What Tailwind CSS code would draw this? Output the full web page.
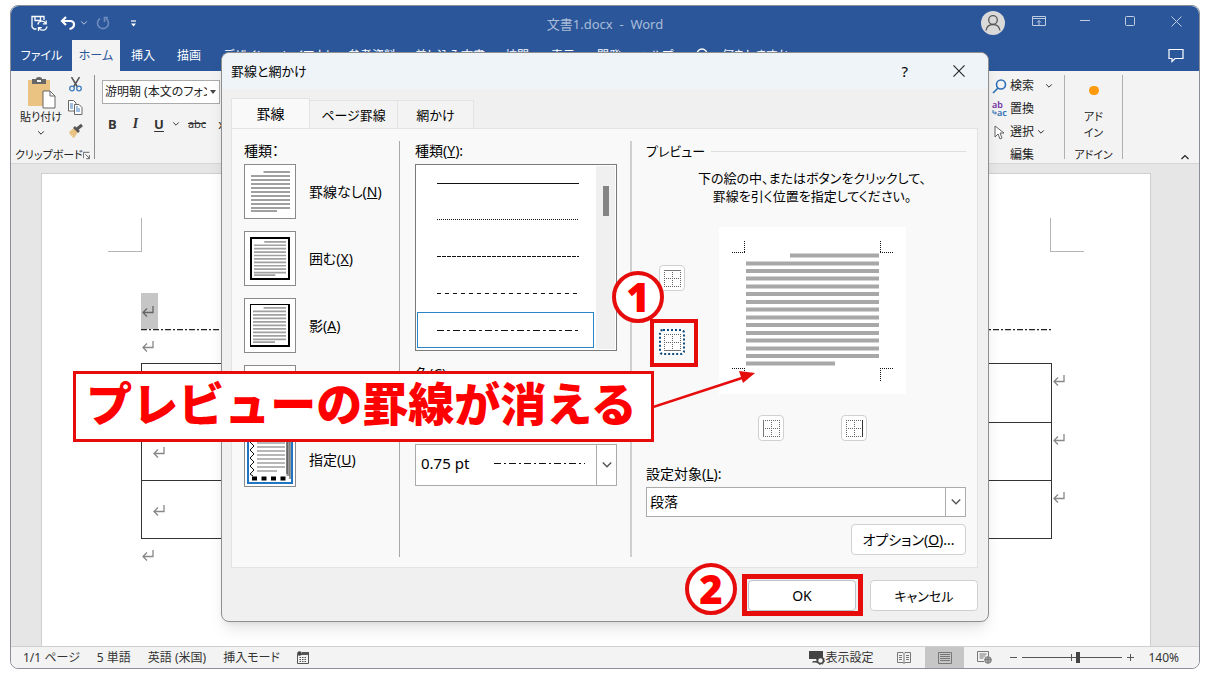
<!DOCTYPE html>
<html lang="ja">
<head>
<meta charset="utf-8">
<title>文書1.docx - Word</title>
<script src="https://cdn.jsdelivr.net/npm/@tailwindcss/browser@4"></script>
</head>
<body class="bg-white font-['Noto_Sans','Noto_Sans_CJK_JP',sans-serif] [font-feature-settings:'palt'] text-[#222] min-h-screen flex overflow-hidden">
<svg class="hidden">
  <symbol id="ret" viewBox="0 0 14 14"><path d="M12 2v6.500H2.500M6 4.500L2 8.500l4 4" fill="none" stroke="currentColor" stroke-width="1.300"/></symbol>
  <symbol id="chev" viewBox="0 0 10 10"><path d="M1.500 3L5 6.500 8.500 3" fill="none" stroke="currentColor" stroke-width="1.200"/></symbol>
  <symbol id="lines" viewBox="0 0 39 41"><path d="M12.500 1H39M0 5H39M0 9H39M0 13H39M0 17H39M0 21H39M0 25H39M0 29H39M0 33H39M0 37H39M0 40H26" stroke="#a0a0a0" stroke-width="2"/></symbol>
</svg>

<div class="relative flex-1 flex flex-col mt-[5px] mb-[7px] ml-[10px] mr-[9px] min-h-[664px] rounded-lg border border-[#8a8f99]">
  <!-- title bar -->
  <header class="bg-[#2b579a] text-white rounded-t-lg">
    <div class="relative flex items-center justify-between h-[34px]">
      <div class="flex items-center pl-5 gap-3">
        <button aria-label="保存"><svg class="size-[17px] block" viewBox="0 0 17 17" fill="none" stroke="#fff" stroke-width="1.300"><path d="M5.500 14H3L1 12V1.500h12V5M4 2v3.500h5.500V2"/><path d="M6.800 9.500a4.300 4.300 0 0 1 8-1M15.200 5.500v3.300h-3.300M16 11.500a4.300 4.300 0 0 1-8 1.500M7.500 16V12.700h3.300"/></svg></button>
        <button aria-label="元に戻す" class="flex items-center gap-1"><svg class="w-4 h-4" viewBox="0 0 16 16" fill="none" stroke="#fff" stroke-width="2.200"><path d="M6 2L2 6l4 4M2.500 6H10q4 0 4 3.500T9.500 14"/></svg><svg class="size-2 opacity-70"><use href="#chev"/></svg></button>
        <button aria-label="やり直し" class="-ml-1"><svg class="size-[14px] block" viewBox="0 0 14 14" fill="none" stroke="#6d8cbd" stroke-width="1.600"><path d="M4 2.500a5.500 5.500 0 1 0 6 0M12 1.500H8.500V6"/></svg></button>
        <button aria-label="カスタマイズ" class="ml-2"><svg class="w-[7px] h-[9px] block" viewBox="0 0 7 9"><path d="M1 2h5" stroke="#fff" stroke-width="1.200"/><path d="M1 4.500h5L3.500 7.500z" fill="#fff"/></svg></button>
      </div>
      <h1 class="absolute inset-x-0 top-2 mx-auto w-fit text-[13px] leading-5 text-[#a9bcd9] whitespace-pre">文書1.docx  -  Word</h1>
      <div class="flex items-center pr-[17px]">
        <svg class="size-6 mr-[27px]" viewBox="0 0 24 24"><circle cx="12" cy="12" r="12" fill="#d9d9d9"/><g fill="none" stroke="#555" stroke-width="1.300"><circle cx="12" cy="9" r="4.300"/><path d="M5 19.500q1-6 7-6t7 6"/></g></svg>
        <button aria-label="リボンの表示オプション" class="mr-[34px] -mt-1"><svg class="w-[14px] h-3 block" viewBox="0 0 14 12" fill="none" stroke="#c0cde2"><path d="M.5 1.500h13v9H.5zM.5 3.500h13M7 10V5.500M5 7.500l2-2 2 2"/></svg></button>
        <button aria-label="最小化" class="mr-[35px] -mt-1"><svg class="w-[10px] h-3 block" viewBox="0 0 10 12"><path d="M0 5.500h10" stroke="#c0cde2"/></svg></button>
        <button aria-label="最大化" class="mr-[35px] -mt-1"><svg class="size-[11px] block" viewBox="0 0 11 11"><rect x=".5" y=".5" width="9" height="9" rx="1" fill="none" stroke="#c0cde2"/></svg></button>
        <button aria-label="閉じる" class="-mt-1"><svg class="size-[11px] block" viewBox="0 0 11 11"><path d="M.5.5l10 10M10.500.5l-10 10" stroke="#c0cde2"/></svg></button>
      </div>
    </div>
    <nav class="flex items-stretch h-[31px] text-[12px] whitespace-nowrap">
      <button class="w-[61px]">ファイル</button>
      <button class="w-12 bg-[#f3f3f3] text-[#2b579a]">ホーム</button>
      <button class="w-[46px]">挿入</button>
      <button class="w-[46px]">描画</button>
      <button class="w-[66px]">デザイン</button>
      <button class="w-[60px]">レイアウト</button>
      <button class="w-[68px]">参考資料</button>
      <button class="w-[88px]">差し込み文書</button>
      <button class="w-[46px]">校閲</button>
      <button class="w-[46px]">表示</button>
      <button class="w-[46px]">開発</button>
      <button class="w-[48px]">ヘルプ</button>
      <button class="flex items-center gap-3 pl-[14px]"><svg class="size-4" viewBox="0 0 16 16" fill="none" stroke="#fff" stroke-width="1.300"><circle cx="8" cy="6" r="5"/><path d="M5 10l-4 5"/></svg>何をしますか</button>
      <button aria-label="コメント" class="ml-auto pr-[15px]"><svg class="w-4 h-[15px]" viewBox="0 0 16 15"><path d="M1 1.500h14v9H7l-3 3v-3H1z" fill="none" stroke="#fff" stroke-width="1.200"/></svg></button>
    </nav>
  </header>

  <!-- ribbon -->
  <div class="flex justify-between h-[93px] bg-[#f3f3f3] border-b border-[#d6d6d6] text-[12px] leading-4">
    <div class="flex">
      <section class="flex flex-col justify-between w-[83px] pt-[6px]">
        <div class="flex">
          <button class="flex flex-col items-center w-[54px] pl-[6px]">
            <svg class="w-8 h-8" viewBox="0 0 32 32"><rect x="3" y="3" width="22" height="26" fill="#eac282"/><path d="M7 2h4q0-2 3-2t3 2h4v5H7z" fill="#666"/><path d="M12 3h4v2h-4z" fill="#f3f3f3"/><path d="M18 14h7l5 5v12H18z" fill="#fff" stroke="#666"/><path d="M25 14v5h5" fill="none" stroke="#666"/></svg>
            <span class="text-[11px] whitespace-nowrap">貼り付け</span>
            <svg class="size-2 mt-1"><use href="#chev"/></svg>
          </button>
          <div class="flex flex-col items-center gap-2 w-5">
            <svg class="size-[15px]" viewBox="0 0 15 15" fill="none"><path d="M3.500 0l6 10M11.500 0l-6 10" stroke="#555" stroke-width="1.500"/><circle cx="4" cy="11.500" r="2.300" stroke="#3e7dc1" stroke-width="1.300"/><circle cx="11" cy="11.500" r="2.300" stroke="#3e7dc1" stroke-width="1.300"/></svg>
            <svg class="size-[15px]" viewBox="0 0 15 15" fill="#fff" stroke="#666"><path d="M.5.5h5l2.500 2.500v8H.5z"/><path d="M6.500 4.500h4.500l3 3v7H6.500z"/><path d="M2 4h3M2 6h3M2 8h3M8 9h4M8 11h4M8 7h2" stroke="#3e7dc1"/></svg>
            <svg class="size-[15px]" viewBox="0 0 15 15"><path d="M1 9l5-4 4 4-4 6-2-1 1-2-2 1z" fill="#eac282"/><path d="M6 4l5 5" stroke="#555" stroke-width="2.500"/><path d="M9 6l5-4" stroke="#555" stroke-width="3"/></svg>
          </div>
        </div>
        <div class="flex items-center justify-between pl-1 pr-1 text-[11px] whitespace-nowrap"><span>クリップボード</span><svg class="size-[9px]" viewBox="0 0 9 9" fill="none" stroke="#444"><path d="M.5 8V.5H8M3 3l5 5M8 4v4.500H4"/></svg></div>
      </section>
      <div class="w-px my-1 bg-[#8f8f8f]"></div>
      <section class="w-[240px] pl-[7px] pt-[9px]">
        <div class="flex">
          <label class="relative block w-[118px]"><span class="sr-only">フォント</span>
            <select class="appearance-none w-full h-[24px] border border-[#ababab] bg-white pl-[2px] text-[12px] whitespace-nowrap"><option>游明朝 (本文のフォン</option></select>
            <span class="absolute right-px top-px bottom-px w-[12px] bg-white flex items-center justify-center"><svg class="w-[6px] h-1" viewBox="0 0 6 4"><path d="M0 0h6L3 4z" fill="#444"/></svg></span>
          </label>
        </div>
        <div class="flex items-center gap-4 mt-3 pl-[6px] text-[13px] leading-4 text-[#333]">
          <button class="font-bold">B</button><button class="font-bold italic font-['Liberation_Serif',serif] text-[14px]">I</button>
          <button class="flex items-center gap-2"><u class="font-bold underline-offset-2">U</u><svg class="size-2"><use href="#chev"/></svg></button>
          <button class="line-through text-[11px] -ml-2">abc</button><button class="-ml-1">x</button>
        </div>
      </section>
    </div>
    <div class="flex">
      <section class="flex flex-col gap-[7px] w-[76px] pt-[7px] pl-1">
        <button class="flex items-center gap-[3px]"><svg class="size-[15px]" viewBox="0 0 15 15" fill="none" stroke="#2f6fb5" stroke-width="1.600"><circle cx="9" cy="5.500" r="4.500"/><path d="M6 9l-5 5"/></svg>検索<svg class="size-2 ml-2"><use href="#chev"/></svg></button>
        <button class="flex items-center gap-[3px]"><svg class="size-[15px] overflow-visible" viewBox="0 0 15 15" font-size="9" font-weight="600"><text x="0" y="6" fill="#7030a0">ab</text><text x="5" y="14" fill="#2f6fb5">ac</text><path d="M1 8v3h3M3 9.500L4.500 11 3 12.500" fill="none" stroke="#2f6fb5"/></svg>置換</button>
        <button class="flex items-center gap-[3px]"><svg class="size-[15px]" viewBox="0 0 15 15"><path d="M3 1v11l3-3 2 5 2-1-2-5h4z" fill="#fff" stroke="#555" stroke-width=".9"/></svg>選択<svg class="size-2"><use href="#chev"/></svg></button>
        <span class="pl-[18px]">編集</span>
      </section>
      <div class="w-px my-1 bg-[#b0b0b0]"></div>
      <section class="flex flex-col items-center w-[57px] pt-[15px]">
        <span class="size-[10px] rounded-full bg-[#ff9a0c] mb-[14px]"></span>
        <button class="text-center text-[11px]">アド<br>イン</button>
        <span class="mt-[6px] text-[11px]">アドイン</span>
      </section>
      <div class="w-px my-1 bg-[#b0b0b0]"></div>
      <div class="w-[76px] flex items-end justify-end pr-[9px] pb-[1px]"><svg class="size-[10px] rotate-180"><use href="#chev"/></svg></div>
    </div>
  </div>

  <!-- document -->
  <main class="flex-1 bg-[#e6e6e6] pt-[9px] pl-[30px] pr-12 flex">
    <article class="flex-1 bg-white border border-b-0 border-[#cfcfcf] pt-11 text-[#888]">
      <div class="flex justify-between px-[66px]">
        <div class="w-[34px] h-[34px] border-r border-b border-[#b5b5b5]"></div>
        <div class="w-[34px] h-[34px] border-l border-b border-[#b5b5b5]"></div>
      </div>
      <div class="pl-[99px] pr-[98px] pt-[41px]">
        <div class="w-[17px] h-[36px] bg-[#c6c6c6] flex items-center text-[#666]"><svg class="size-[14px]"><use href="#ret"/></svg></div>
        <svg class="block w-full h-[2px]"><path d="M0 .5h2000" stroke="#222" stroke-width="1.500" stroke-dasharray="6 2 2 2"/></svg>
        <svg class="block size-[14px] mt-2 mb-[10px]"><use href="#ret"/></svg>
      </div>
      <div class="pl-[99px] pr-[82px]">
        <table class="w-full border-collapse table-fixed">
          <tr class="h-[59px]"><td class="w-1/2 border border-[#333] pl-[10px]"><svg class="size-[14px]"><use href="#ret"/></svg></td><td class="border border-[#333]"></td><td class="w-[17px] align-top pt-[9px]"><svg class="size-[14px]"><use href="#ret"/></svg></td></tr>
          <tr class="h-[58px]"><td class="border border-[#333] pl-[10px]"><svg class="size-[14px]"><use href="#ret"/></svg></td><td class="border border-[#333]"></td><td class="align-top pt-[9px]"><svg class="size-[14px]"><use href="#ret"/></svg></td></tr>
          <tr class="h-[58px]"><td class="border border-[#333] pl-[10px]"><svg class="size-[14px]"><use href="#ret"/></svg></td><td class="border border-[#333]"></td><td class="align-top pt-[9px]"><svg class="size-[14px]"><use href="#ret"/></svg></td></tr>
        </table>
        <svg class="block size-[14px] mt-[9px]"><use href="#ret"/></svg>
      </div>
    </article>
  </main>

  <!-- status bar -->
  <footer class="flex items-center justify-between h-[22px] bg-[#f3f3f3] border-t border-[#cfcfcf] rounded-b-lg pl-3 pr-5 text-[12px] leading-4 text-[#333]">
    <div class="flex items-center gap-[17px]"><span>1/1 ページ</span><span>5 単語</span><span>英語 (米国)</span><span>挿入モード</span>
      <svg class="w-3 h-[13px]" viewBox="0 0 12 13"><path d="M.5 3.500h11v9H.5z" fill="none" stroke="#555"/><path d="M5 1h7v3H5z" fill="#555"/><circle cx="2.500" cy="2.500" r="2.300" fill="#444"/><path d="M2.500 6.500h7M2.500 8.500h7M2.500 10.500h7" stroke="#555" stroke-dasharray="1.500 1"/></svg>
    </div>
    <div class="flex items-center h-full">
      <button class="flex items-center"><svg class="w-4 h-[14px]" viewBox="0 0 16 14"><path d="M0 0h14v8H0zM4 10h5v1.500H3z" fill="#444"/><circle cx="11.500" cy="9.500" r="3" fill="#f3f3f3" stroke="#444" stroke-width="1.500"/><circle cx="11.500" cy="9.500" r="4" fill="none" stroke="#444" stroke-dasharray="1.500 1.600"/></svg>表示設定</button>
      <button aria-label="閲覧モード" class="ml-6"><svg class="w-[14px] h-3 block" viewBox="0 0 14 12" fill="none" stroke="#777"><path d="M.5.5H6l1 1 1-1h5.500v10H8l-1 1-1-1H.5zM7 1.500v10M2 3.500h3M2 5.500h3M2 7.500h3M9 3.500h3M9 5.500h3M9 7.500h3"/></svg></button>
      <button aria-label="印刷レイアウト" class="ml-[14px] w-[39px] h-full bg-[#c6c6c6] flex items-center justify-center"><svg class="w-[14px] h-3" viewBox="0 0 14 12" fill="none" stroke="#777"><path d="M.5.5h13v11H.5zM2 2.500h10M2 4.500h10M2 6.500h10M2 8.500h10"/></svg></button>
      <button aria-label="Web レイアウト" class="ml-[13px]"><svg class="w-[15px] h-[13px] block" viewBox="0 0 15 13" fill="none" stroke="#777"><path d="M7 10.500H.5V.5h11v5M2.500 3h7M2.500 5h6M2.500 7h4"/><circle cx="11" cy="9" r="3.300" fill="#aaa"/><path d="M8 9q3-2 6 0M11 6v6"/></svg></button>
      <button aria-label="縮小" class="ml-[17px]"><svg class="size-[9px] block"><path d="M1 4.500h7" stroke="#555"/></svg></button>
      <label class="relative ml-1 flex items-center w-[100px]"><span class="sr-only">ズーム</span>
        <input type="range" min="0" max="100" value="56" class="appearance-none w-full h-3 bg-transparent bg-[linear-gradient(#555,#555)] bg-[length:100%_1px] bg-center bg-no-repeat [&::-webkit-slider-thumb]:appearance-none [&::-webkit-slider-thumb]:w-1 [&::-webkit-slider-thumb]:h-[11px] [&::-webkit-slider-thumb]:bg-[#444]">
        <span class="absolute left-[49px] w-px h-[7px] bg-[#555]"></span></label>
      <button aria-label="拡大" class="ml-1"><svg class="size-[9px] block"><path d="M1 4.500h7M4.500 1v7" stroke="#555"/></svg></button>
      <span class="ml-[13px]">140%</span>
    </div>
  </footer>

  <!-- borders and shading dialog, floating over the document -->
  <div role="dialog" aria-label="罫線と網かけ" class="absolute left-[210px] top-[46px] w-[768px] rounded-lg border border-[#8f8f8f] bg-[#f0f0f0] text-[14px] leading-5 text-black shadow-lg shadow-black/10">
    <div class="flex items-center h-9 bg-[#eff4f9] rounded-t-lg pl-[9px] pr-[23px]">
      <h2 class="text-[13px]">罫線と網かけ</h2>
      <button aria-label="ヘルプ" class="ml-auto mr-[45px] text-[15px]">?</button>
      <button aria-label="閉じる"><svg class="size-[12px] block" viewBox="0 0 13 13"><path d="M.5.5l12 12M12.500.5l-12 12" stroke="#222" stroke-width="1.200"/></svg></button>
    </div>
    <div class="pl-[9px] pr-[10px] pt-[9px] pb-[10px]">
      <div role="tablist" class="flex items-end text-[14px]">
        <button role="tab" aria-selected="true" class="w-[79px] h-[30px] bg-[#f9f9f9] border border-b-0 border-[#e3e3e3]">罫線</button>
        <button role="tab" class="w-[88px] h-7 bg-[#f3f3f3] border border-b-0 border-l-0 border-[#e3e3e3] text-[13px]">ページ罫線</button>
        <button role="tab" class="w-[76px] h-7 bg-[#f3f3f3] border border-b-0 border-l-0 border-[#e3e3e3] text-[13px]">網かけ</button>
      </div>
      <div role="tabpanel" class="flex h-[440px] bg-[#f9f9f9] border border-[#e3e3e3] pl-3 pr-[11px] pt-3 pb-[10px]">
        <section class="w-[156px] border-r border-[#a8a8a8]">
          <div>種類：</div>
          <div class="flex flex-col gap-3 items-start mt-[3px] whitespace-nowrap">
            <button class="flex items-center gap-[13px]"><span class="w-[52px] h-[55px] border border-[#8a8a8a] bg-white flex items-center justify-center"><svg class="w-[39px] h-[41px]"><use href="#lines"/></svg></span><span>罫線なし(<u>N</u>)</span></button>
            <button class="flex items-center gap-[13px]"><span class="w-[52px] h-[55px] border border-[#8a8a8a] bg-white flex items-center justify-center"><svg class="w-10 h-[43px] border-2 border-black p-[2px]" viewBox="0 0 39 41" preserveAspectRatio="none"><use href="#lines"/></svg></span><span>囲む(<u>X</u>)</span></button>
            <button class="flex items-center gap-[13px]"><span class="w-[52px] h-[55px] border border-[#8a8a8a] bg-white flex items-center justify-center"><svg class="w-10 h-[43px] border border-r-2 border-b-2 border-black p-[2px]" viewBox="0 0 39 41" preserveAspectRatio="none"><use href="#lines"/></svg></span><span>影(<u>A</u>)</span></button>
            <button aria-label="3-D(D)" class="flex items-center"><span class="w-[52px] h-[55px] border border-[#8a8a8a] bg-white flex items-center justify-center"><svg class="w-10 h-[43px] border-2 border-black p-[2px]" viewBox="0 0 39 41" preserveAspectRatio="none"><use href="#lines"/></svg></span></button>
            <button class="flex items-center gap-[13px]"><span class="w-[52px] h-[55px] border border-[#8a8a8a] bg-white flex items-center justify-center"><svg class="w-[46px] h-[49px] border-2 border-[#1f74c4]" viewBox="0 0 42 45"><path d="M5 1l-4 4 4 4-4 4 4 4-4 4 4 4-4 4 4 4-4 4 3 2" fill="none" stroke="#111"/><path d="M8 2h28M8 6h28M8 10h28M8 14h28M8 18h28M8 22h28M8 26h28M8 30h28M8 34h20" stroke="#a0a0a0" stroke-width="1.500"/><path d="M39 0v39" stroke="#999" stroke-width="3"/><path d="M41 0v42M38 0v37" stroke="#333"/><path d="M3 41.500h34" stroke="#000" stroke-width="4" stroke-dasharray="5 4.500"/></svg></span><span>指定(<u>U</u>)</span></button>
          </div>
        </section>
        <section class="w-[232px] pl-[15px] pr-[13px] border-r-2 border-[#cfcfcf] flex flex-col">
          <div id="styleLabel">種類(<u>Y</u>):</div>
          <div role="listbox" aria-labelledby="styleLabel" class="flex h-[187px] mt-[3px] border border-[#7a7a7a] bg-white p-px">
            <div class="flex-1 flex flex-col mr-[2px]">
              <button role="option" aria-label="実線" class="h-[35px] pl-[5px] flex items-center justify-center"><svg class="w-[142px] h-[1px]"><path d="M0 .5h142" stroke="#111"/></svg></button>
              <button role="option" aria-label="点線" class="h-[37px] pl-[5px] flex items-center justify-center"><svg class="w-[142px] h-[1px]"><path d="M0 .5h142" stroke="#111" stroke-dasharray="1 1"/></svg></button>
              <button role="option" aria-label="破線（細）" class="h-[37px] pl-[5px] flex items-center justify-center"><svg class="w-[142px] h-[1px]"><path d="M0 .5h142" stroke="#111" stroke-dasharray="4 1"/></svg></button>
              <button role="option" aria-label="破線" class="h-[37px] pl-[5px] flex items-center justify-center"><svg class="w-[142px] h-[1px]"><path d="M0 .5h142" stroke="#111" stroke-dasharray="4 4"/></svg></button>
              <button role="option" aria-label="一点鎖線" aria-selected="true" class="h-[36px] pl-[5px] flex items-center justify-center border border-[#2b84c6]"><svg class="w-[142px] h-[1px]"><path d="M0 .5h142" stroke="#111" stroke-dasharray="7 3 3 3"/></svg></button>
            </div>
            <div class="w-[19px] bg-[#f0f0f0] pt-5 flex justify-center"><span class="w-[6px] h-[30px] bg-[#858585]"></span></div>
          </div>
          <label for="color" class="mt-[13px]">色(<u>C</u>):</label>
          <select id="color" class="appearance-none h-7 border border-[#ababab] bg-white"><option label=" "></option></select>
          <div class="relative mt-8">
            <select id="weight" aria-label="線の太さ(W)" class="appearance-none block w-full h-[42px] border border-[#ababab] bg-white pl-[5px] pb-1 text-[15px]"><option>0.75 pt</option></select>
            <svg class="absolute left-[79px] top-[19px] w-[91px] h-px pointer-events-none"><path d="M0 .5h91" stroke="#111" stroke-dasharray="7 3 2 3"/></svg>
            <span class="absolute right-0 inset-y-0 w-[21px] border border-[#ababab] flex items-center justify-center text-[#555] pointer-events-none"><svg class="size-3"><use href="#chev"/></svg></span>
          </div>
        </section>
        <section class="flex-1 pl-[14px] flex flex-col">
          <div class="flex items-center gap-[6px] text-[13px]">プレビュー<span class="flex-1 h-px bg-[#dedede]"></span></div>
          <p class="text-center text-[13px] leading-[18px] mt-2 pl-[12px]">下の絵の中、またはボタンをクリックして、<br>罫線を引く位置を指定してください。</p>
          <div class="flex mt-[22px] pl-[13px]">
            <div class="flex flex-col gap-[38px] w-[60px] pt-[38px]">
              <button aria-label="上罫線" class="size-[26px] rounded border border-[#d0d0d0] bg-white flex items-center justify-center"><svg class="size-[17px]" viewBox="0 0 17 17"><path d="M.5 0v17M8.500 0v17M16.500 0v17M0 8.500h17M0 16.500h17" stroke="#666" stroke-dasharray="1 1"/><path d="M0 .5h17" stroke="#777"/></svg></button>
              <button aria-label="下罫線" class="size-[26px] rounded border-2 border-dotted border-[#0f4c7c] bg-white flex items-center justify-center"><svg class="size-[17px]" viewBox="0 0 17 17"><path d="M.5 0v17M8.500 0v17M16.500 0v17M0 8.500h17M0 .5h17" stroke="#666" stroke-dasharray="1 1"/><path d="M0 16.500h17" stroke="#777"/></svg></button>
            </div>
            <svg class="w-[187px] h-[167px] bg-white" viewBox="0 0 187 167" fill="none">
              <path d="M13 25.500h13M25.500 14v12M161.500 14v12M161 25.500h13M13 141.500h13M25.500 141v13M161 141.500h13M161.500 141v13" stroke="#111" stroke-dasharray="1 1"/>
              <path d="M71 28.500h89M27 36.500h133M27 44h133M27 51.500h133M27 59.500h133M27 67h133M27 75h133M27 82.500h133M27 90.500h133M27 98h133M27 106h133M27 113.500h133M27 121.500h133M27 129h133M27 136.500h89" stroke="#a8a8a8" stroke-width="4"/>
            </svg>
          </div>
          <div class="flex gap-[57px] pl-[112px] mt-[21px]">
            <button aria-label="左罫線" class="size-[26px] rounded border border-[#d0d0d0] bg-white flex items-center justify-center"><svg class="size-[17px]" viewBox="0 0 17 17"><path d="M8.500 0v17M16.500 0v17M0 .5h17M0 8.500h17M0 16.500h17" stroke="#666" stroke-dasharray="1 1"/><path d="M.5 0v17" stroke="#777"/></svg></button>
            <button aria-label="右罫線" class="size-[26px] rounded border border-[#d0d0d0] bg-white flex items-center justify-center"><svg class="size-[17px]" viewBox="0 0 17 17"><path d="M.5 0v17M8.500 0v17M0 .5h17M0 8.500h17M0 16.500h17" stroke="#666" stroke-dasharray="1 1"/><path d="M16.500 0v17" stroke="#333"/></svg></button>
          </div>
          <label for="target" class="mt-[23px]">設定対象(<u>L</u>):</label>
          <div class="relative mt-[3px]">
            <select id="target" class="appearance-none block w-full h-[30px] border border-[#ababab] bg-white pl-[3px]"><option>段落</option></select>
            <span class="absolute right-0 inset-y-0 w-[21px] border border-[#ababab] flex items-center justify-center text-[#555] pointer-events-none"><svg class="size-3"><use href="#chev"/></svg></span>
          </div>
          <button class="self-end mt-[7px] w-[115px] h-[31px] rounded border border-[#d0d0d0] bg-white">オプション(<u>O</u>)...</button>
        </section>
      </div>
      <div class="flex justify-end gap-[14px] mt-3">
        <button class="w-[108px] h-[31px] rounded border border-[#b8c4cc] bg-white">OK</button>
        <button class="w-[108px] h-[31px] rounded border border-[#d0d0d0] bg-white text-[13px]">キャンセル</button>
      </div>
    </div>

    <!-- tutorial callouts -->
    <svg class="absolute left-[431px] top-[318px] w-[106px] h-[38px] pointer-events-none"><path d="M0 36L92 6" stroke="#e60c0c" stroke-width="2.500"/><path d="M86 0l16 2-12 10z" fill="#e60c0c"/></svg>
    <div class="absolute left-[-149px] top-[318px] w-[581px] h-[71px] bg-white border-3 border-[#e60c0c] flex items-center justify-center pb-[11px] pr-1 text-[46px] leading-[64px] font-black text-[#f00] whitespace-nowrap [font-feature-settings:normal] font-['Noto_Sans_CJK_JP',sans-serif]">プレビューの罫線が消える</div>
    <div class="absolute left-[428px] top-[266px] w-12 h-[48px] border-4 border-[#e60c0c]"></div>
    <div class="absolute left-[520px] top-[521px] w-[121px] h-[42px] border-5 border-[#e60c0c]"></div>
    <div class="absolute left-[390px] top-[218px] size-[52px] rounded-full bg-white border-4 border-[#e60c0c] flex items-center justify-center text-[40px] leading-10 font-black text-[#f00] font-['Noto_Sans',sans-serif]">1</div>
    <div class="absolute left-[463px] top-[510px] size-[52px] rounded-full bg-white border-4 border-[#e60c0c] flex items-center justify-center text-[40px] leading-10 font-black text-[#f00] font-['Noto_Sans',sans-serif]">2</div>
  </div>
</div>
</body>
</html>
